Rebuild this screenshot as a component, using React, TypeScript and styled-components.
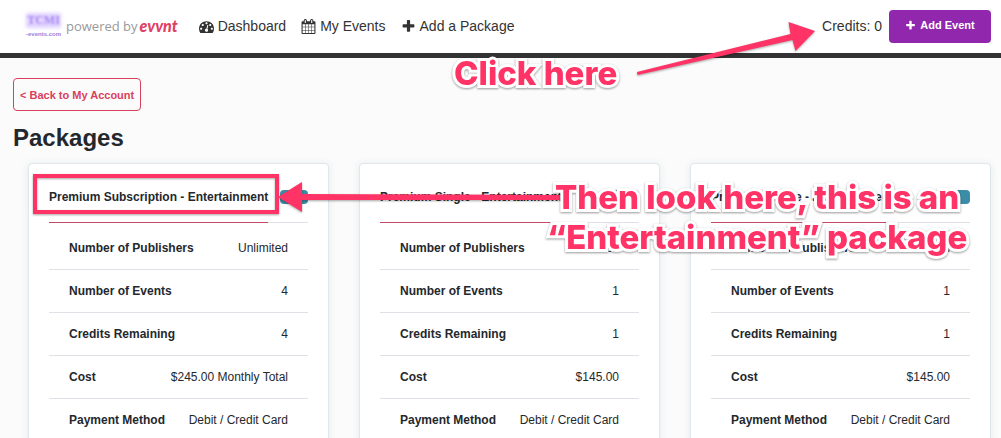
import React from 'react';
import styled, { createGlobalStyle } from 'styled-components';

const GlobalStyle = createGlobalStyle`
  *, *::before, *::after { box-sizing: border-box; }
  body {
    margin: 0;
    background: #fbfbfb;
    color: #24282d;
    font-family: "Liberation Sans", Arial, sans-serif;
    font-size: 12px;
  }
`;

const Page = styled.div`
  position: relative;
  height: 100vh;
  overflow: hidden;
`;

const Header = styled.header`
  display: flex;
  align-items: center;
  height: 58px;
  padding: 0 10px 1px 27px;
  background: #fff;
  border-bottom: 5px solid #333;
`;

const Brand = styled.a`
  display: flex;
  align-items: center;
  gap: 6px;
  text-decoration: none;
`;

const Club = styled.span`
  display: flex;
  flex-direction: column;
  align-items: center;
  width: 33px;
`;

const ClubName = styled.span`
  font: 700 12px/13px "Liberation Serif", serif;
  color: #a685f2;
  background: #e2d6ff;
  box-shadow: 0 0 3px 1px #e2d6ff;
  filter: blur(1px);
`;

const ClubDomain = styled.span`
  margin-top: 3px;
  font-weight: 700;
  font-size: 6px;
  line-height: 8px;
  white-space: nowrap;
  color: #9a80dc;
`;

const Powered = styled.span`
  display: flex;
  align-items: center;
  gap: 2px;
  font: 400 13px/20px "Open Sans", sans-serif;
  color: #999;
`;

const Evvnt = styled.span`
  font: italic 900 16px/20px Lato, sans-serif;
  color: #e0405f;
`;

const Nav = styled.nav`
  display: flex;
  gap: 15px;
  margin-left: 21px;
`;

const NavLink = styled.a`
  display: flex;
  align-items: center;
  gap: 4px;
  font-size: 14px;
  line-height: 20px;
  color: #333;
  text-decoration: none;
`;

const Account = styled.div`
  display: flex;
  align-items: center;
  gap: 7px;
  margin-left: auto;
  font-size: 14px;
  color: #333;
`;

const AddButton = styled.button`
  display: flex;
  align-items: center;
  justify-content: center;
  gap: 4px;
  width: 102px;
  height: 33px;
  padding: 0 0 2px;
  border: 0;
  border-radius: 4px;
  background: #9127ac;
  color: #fff;
  font: 700 11px "Liberation Sans", Arial, sans-serif;
`;

const Main = styled.main`
  padding: 20px 10px 0 13px;
`;

const BackLink = styled.a`
  display: inline-flex;
  align-items: center;
  height: 33px;
  padding: 0 6px;
  border: 1px solid #d9405c;
  border-radius: 4px;
  color: #d9405c;
  font-weight: 700;
  font-size: 11px;
  text-decoration: none;
`;

const Heading = styled.h1`
  margin: 12px 0 11px;
  font-size: 24px;
  line-height: 29px;
`;

const Cards = styled.div`
  display: grid;
  grid-template-columns: repeat(3, minmax(0, 1fr));
  gap: 30px;
  padding-left: 15px;
`;

const Card = styled.section`
  padding: 13px 20px 20px;
  border: 1px solid #dfe7ea;
  border-radius: 4px;
  background: #fff;
  box-shadow: 0 1px 8px #e4eaec;
`;

const CardHead = styled.div`
  display: flex;
  align-items: center;
  justify-content: space-between;
  height: 46px;
  margin-bottom: 4px;
  border-bottom: 1px solid #dee2e6;
`;

const CardTitle = styled.h2`
  margin: 0 0 -1px;
  border-bottom: 1px solid #c24a66;
  font-size: 12px;
  line-height: 40px;
  height: 46px;
  white-space: nowrap;
`;

const Badge = styled.span`
  width: 28px;
  height: 14px;
  margin-bottom: 6px;
  border-radius: 4px;
  background: #3b8ca6;
`;

const Details = styled.table`
  display: block;

  tbody { display: block; }
  tr {
    display: flex;
    align-items: center;
    justify-content: space-between;
    height: 43px;
    padding: 0 20px;
    border-bottom: 1px solid #dee2e6;
    white-space: nowrap;
  }
  th, td { padding: 0; }
`;

const Arrows = styled.svg`
  position: absolute;
  top: 0;
  left: 0;
  overflow: visible;
  pointer-events: none;
  filter: drop-shadow(0 1px 1px rgba(0, 0, 0, 0.35));
`;

const Note = styled.p<{ $left: number; $top: number }>`
  position: absolute;
  left: ${(p) => p.$left}px;
  top: ${(p) => p.$top}px;
  margin: 0;
  font: 800 33px/40px Inter, sans-serif;
  text-align: center;
  white-space: nowrap;
  color: #ff3366;
  -webkit-text-stroke: 6px #fff;
  paint-order: stroke fill;
  stroke-linejoin: round;
  filter: drop-shadow(0 1px 1px rgba(0, 0, 0, 0.4));
`;

const icons = {
  gauge:
    'M384 1152q0-53-37.5-90.5t-90.5-37.5-90.5 37.5-37.5 90.5 37.5 90.5 90.5 37.5 90.5-37.5 37.5-90.5zm192-448q0-53-37.5-90.5t-90.5-37.5-90.5 37.5-37.5 90.5 37.5 90.5 90.5 37.5 90.5-37.5 37.5-90.5zm428 481l101-382q6-26-7.5-48.5t-38.5-29.5-48 6.5-30 39.5l-101 382q-60 5-107 43.5t-63 98.5q-20 77 20 146t117 89 146-20 89-117q16-60-6-117t-72-91zm660-33q0-53-37.5-90.5t-90.5-37.5-90.5 37.5-37.5 90.5 37.5 90.5 90.5 37.5 90.5-37.5 37.5-90.5zm-640-640q0-53-37.5-90.5t-90.5-37.5-90.5 37.5-37.5 90.5 37.5 90.5 90.5 37.5 90.5-37.5 37.5-90.5zm448 192q0-53-37.5-90.5t-90.5-37.5-90.5 37.5-37.5 90.5 37.5 90.5 90.5 37.5 90.5-37.5 37.5-90.5zm320 448q0 261-141 483-19 29-54 29h-1402q-35 0-54-29-141-221-141-483 0-182 71-348t191-286 286-191 348-71 348 71 286 191 191 286 71 348z',
  calendar:
    'M192 1664h288v-288h-288v288zm352 0h320v-288h-320v288zm-352-352h288v-320h-288v320zm352 0h320v-320h-320v320zm-352-384h288v-288h-288v288zm736 736h320v-288h-320v288zm-384-736h320v-288h-320v288zm768 736h288v-288h-288v288zm-384-352h320v-320h-320v320zm-352-864v-288q0-13-9.5-22.5t-22.5-9.5h-64q-13 0-22.5 9.5t-9.5 22.5v288q0 13 9.5 22.5t22.5 9.5h64q13 0 22.5-9.5t9.5-22.5zm736 864h288v-320h-288v320zm-384-384h320v-288h-320v288zm384 0h288v-288h-288v288zm32-480v-288q0-13-9.5-22.5t-22.5-9.5h-64q-13 0-22.5 9.5t-9.5 22.5v288q0 13 9.5 22.5t22.5 9.5h64q13 0 22.5-9.5t9.5-22.5zm384-64v1280q0 52-38 90t-90 38h-1408q-52 0-90-38t-38-90v-1280q0-52 38-90t90-38h128v-96q0-66 47-113t113-47h64q66 0 113 47t47 113v96h384v-96q0-66 47-113t113-47h64q66 0 113 47t47 113v96h128q52 0 90 38t38 90z',
  plus:
    'M1600 736v192q0 40-28 68t-68 28h-416v416q0 40-28 68t-68 28h-192q-40 0-68-28t-28-68v-416h-416q-40 0-68-28t-28-68v-192q0-40 28-68t68-28h416v-416q0-40 28-68t68-28h192q40 0 68 28t28 68v416h416q40 0 68 28t28 68z',
};

const Icon = ({ name, size }: { name: keyof typeof icons; size: number }) => (
  <svg width={size} height={size} viewBox="0 0 1792 1792" fill="currentColor" aria-hidden="true">
    <path d={icons[name]} />
  </svg>
);

const packages = [
  { id: 1, title: 'Premium Subscription - Entertainment', count: '4', cost: '$245.00 Monthly Total' },
  { id: 2, title: 'Premium Single - Entertainment', count: '1', cost: '$145.00' },
  { id: 3, title: 'Premium Single - Entertainment', count: '1', cost: '$145.00' },
];

export default function App() {
  return (
    <Page>
      <GlobalStyle />
      <Header>
        <Brand href="#">
          <Club>
            <ClubName>TCMI</ClubName>
            <ClubDomain>-events.com</ClubDomain>
          </Club>
          <Powered>
            powered by <Evvnt>evvnt</Evvnt>
          </Powered>
        </Brand>
        <Nav>
          <NavLink href="#"><Icon name="gauge" size={15} />Dashboard</NavLink>
          <NavLink href="#"><Icon name="calendar" size={15} />My Events</NavLink>
          <NavLink href="#"><Icon name="plus" size={15} />Add a Package</NavLink>
        </Nav>
        <Account>
          <span>Credits: 0</span>
          <AddButton type="button"><Icon name="plus" size={11} />Add Event</AddButton>
        </Account>
      </Header>
      <Main>
        <BackLink href="#">&lt; Back to My Account</BackLink>
        <Heading>Packages</Heading>
        <Cards>
          {packages.map((p) => (
            <Card key={p.id}>
              <CardHead>
                <CardTitle>{p.title}</CardTitle>
                <Badge />
              </CardHead>
              <Details>
                <tbody>
                  <tr><th scope="row">Number of Publishers</th><td>Unlimited</td></tr>
                  <tr><th scope="row">Number of Events</th><td>{p.count}</td></tr>
                  <tr><th scope="row">Credits Remaining</th><td>{p.count}</td></tr>
                  <tr><th scope="row">Cost</th><td>{p.cost}</td></tr>
                  <tr><th scope="row">Payment Method</th><td>Debit / Credit Card</td></tr>
                </tbody>
              </Details>
            </Card>
          ))}
        </Cards>
      </Main>
      <Arrows width="820" height="220" viewBox="0 0 820 220" fill="#ff3366" aria-hidden="true">
        <path d="M637 72 L790.500 34 L788.500 22 L815 31 L795.500 51 L792.500 40 L637.500 75 Z" />
        <path d="M278 197 L302 182 V194 L560 195 V200 L302 200 V212 Z" />
        <rect x="35" y="176" width="242" height="36" fill="none" stroke="#ff3366" strokeWidth="4" />
      </Arrows>
      <Note $left={454} $top={53}>Click here</Note>
      <Note $left={547} $top={177}>
        Then look here, this is an
        <br />
        “Entertainment” package
      </Note>
    </Page>
  );
}
